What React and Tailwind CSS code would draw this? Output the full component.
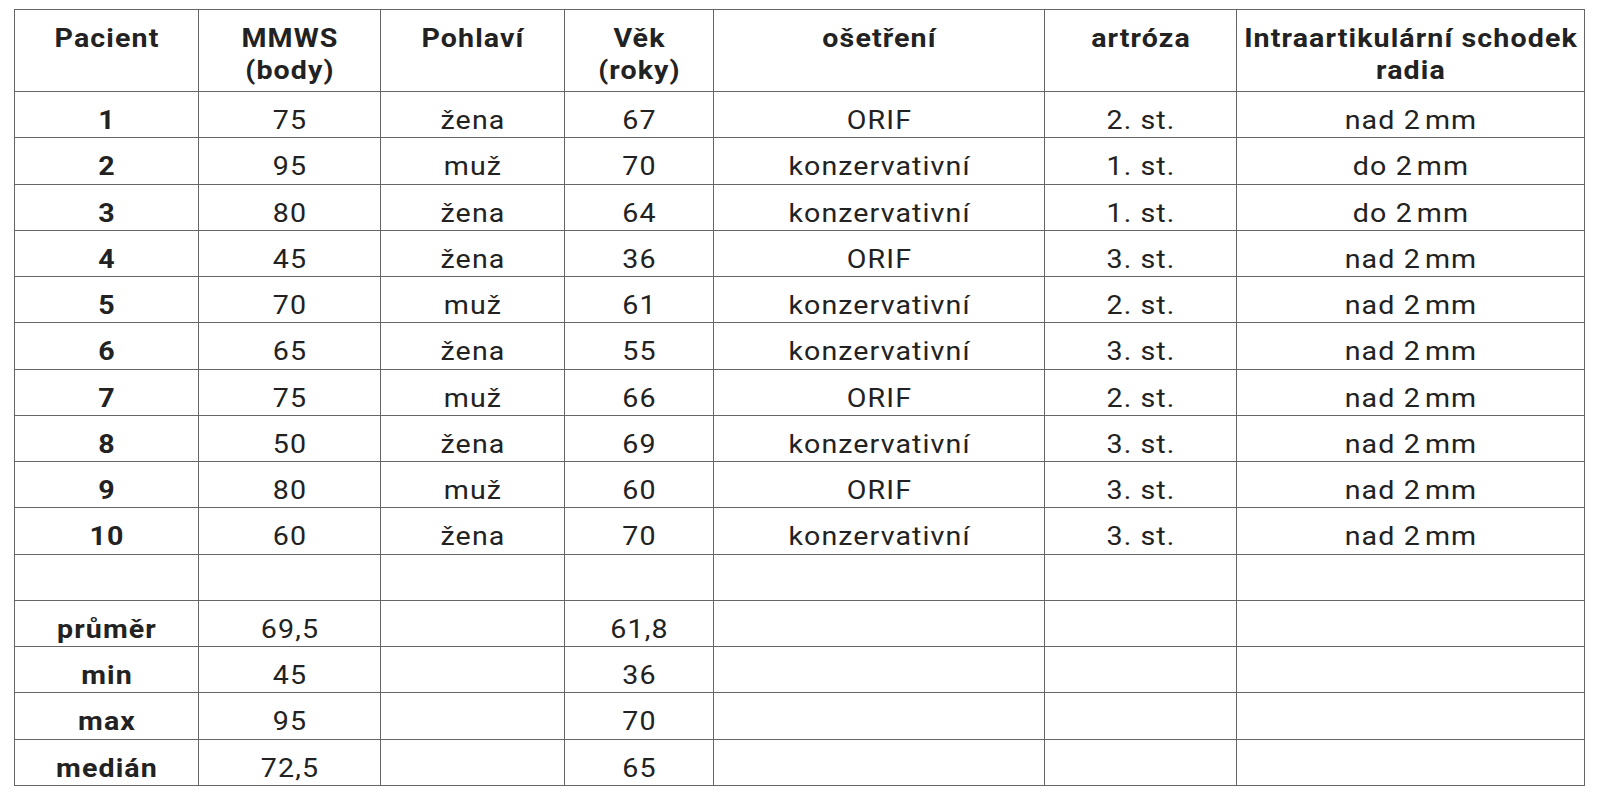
import React from 'react';

const rows = [
  ['1', '75', 'žena', '67', 'ORIF', '2. st.', 'nad 2\u200Amm'],
  ['2', '95', 'muž', '70', 'konzervativní', '1. st.', 'do 2\u200Amm'],
  ['3', '80', 'žena', '64', 'konzervativní', '1. st.', 'do 2\u200Amm'],
  ['4', '45', 'žena', '36', 'ORIF', '3. st.', 'nad 2\u200Amm'],
  ['5', '70', 'muž', '61', 'konzervativní', '2. st.', 'nad 2\u200Amm'],
  ['6', '65', 'žena', '55', 'konzervativní', '3. st.', 'nad 2\u200Amm'],
  ['7', '75', 'muž', '66', 'ORIF', '2. st.', 'nad 2\u200Amm'],
  ['8', '50', 'žena', '69', 'konzervativní', '3. st.', 'nad 2\u200Amm'],
  ['9', '80', 'muž', '60', 'ORIF', '3. st.', 'nad 2\u200Amm'],
  ['10', '60', 'žena', '70', 'konzervativní', '3. st.', 'nad 2\u200Amm'],
  ['', '', '', '', '', '', ''],
  ['průměr', '69,5', '', '61,8', '', '', ''],
  ['min', '45', '', '36', '', '', ''],
  ['max', '95', '', '70', '', '', ''],
  ['medián', '72,5', '', '65', '', '', ''],
];

const widths = ['w-[184px]', 'w-[182px]', 'w-[184px]', 'w-[149px]', 'w-[331px]', 'w-[192px]', 'w-[348px]'];

const headers = [
  ['Pacient'],
  ['MMWS', '(body)'],
  ['Pohlaví'],
  ['Věk', '(roky)'],
  ['ošetření'],
  ['artróza'],
  ['Intraartikulární schodek', 'radia'],
];

const App = () => {
  return (
    <div className="min-h-screen bg-white pt-[9px] pl-[14px] text-[#222] font-['Roboto',sans-serif]">
      <table className="table-fixed border-collapse border border-[#666] w-[1570px]">
        <colgroup>
          {widths.map((w, i) => (
            <col key={i} className={w} />
          ))}
        </colgroup>
        <thead>
          <tr className="h-[82px]">
            {headers.map((lines, i) => (
              <th key={i} className="border border-[#666] align-top pt-[12px] pl-[1px] text-[26px] leading-[32px] tracking-[1px] font-bold">
                {lines.map((l, j) => (
                  <div key={j} className="scale-x-[1.1] whitespace-nowrap">{l}</div>
                ))}
              </th>
            ))}
          </tr>
        </thead>
        <tbody>
          {rows.map((r, i) => (
            <tr key={i} className="h-[46.27px]">
              {r.map((c, j) => (
                <td
                  key={j}
                  className={`border border-[#666] align-top pt-[12px] pl-[1px] text-center text-[26px] leading-[32px] tracking-[1px] ${j === 0 ? 'font-bold' : 'font-normal'}`}
                >
                  <div className="scale-x-[1.1] whitespace-nowrap">{c}</div>
                </td>
              ))}
            </tr>
          ))}
        </tbody>
      </table>
    </div>
  );
};

export default App;
